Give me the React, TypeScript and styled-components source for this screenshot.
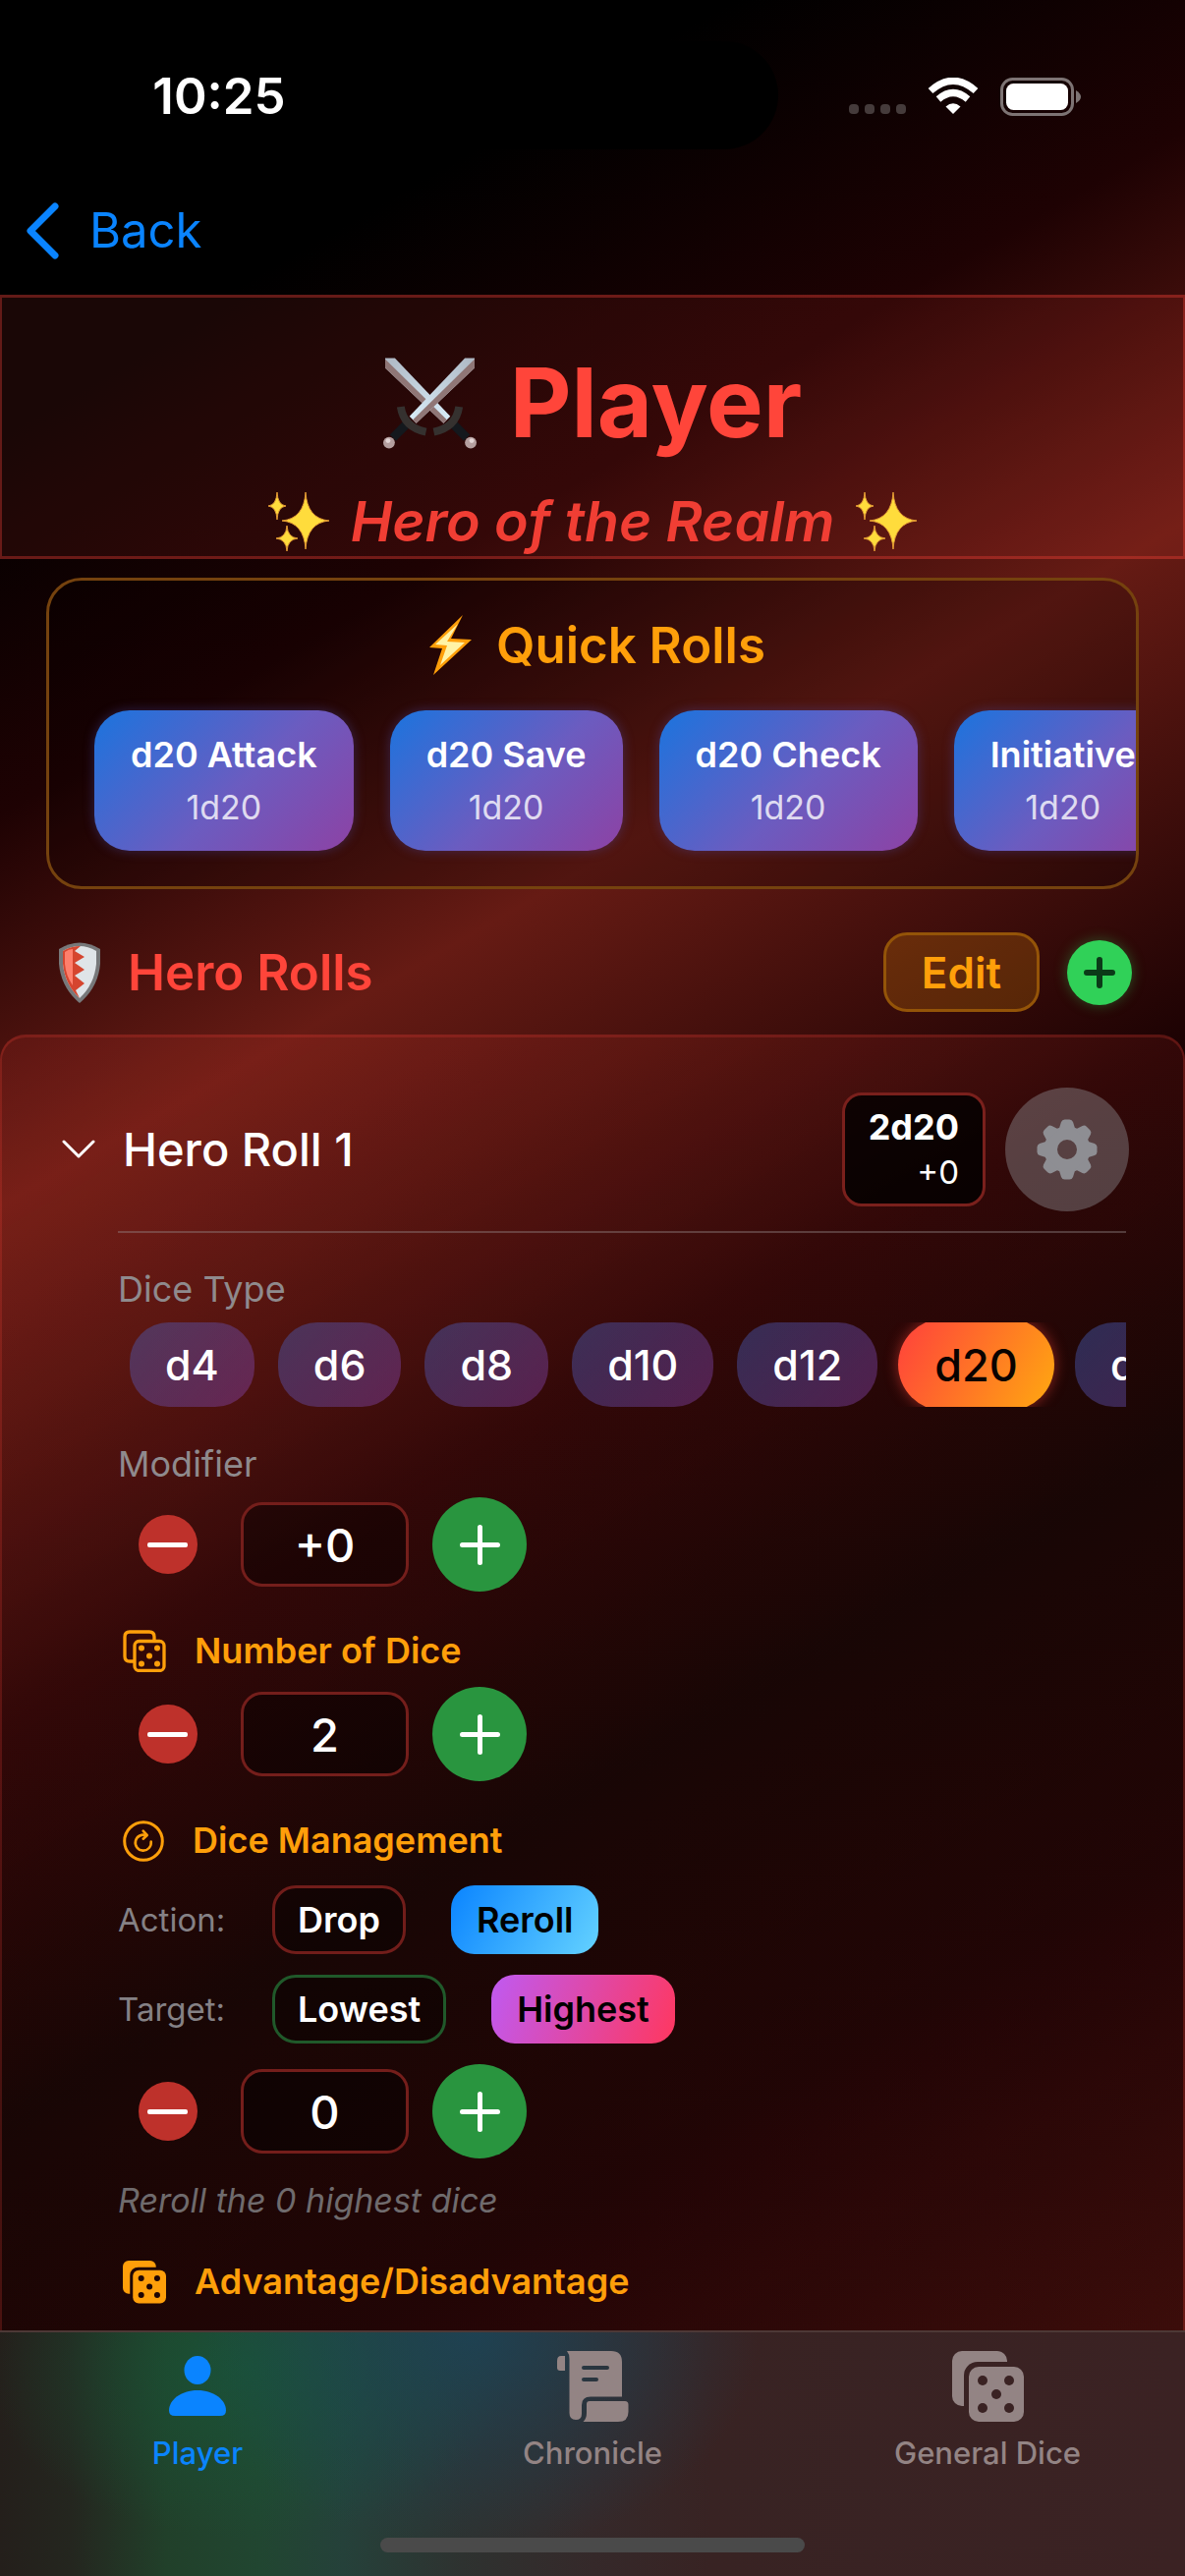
import React, { useState } from "react";
import styled, { createGlobalStyle, css } from "styled-components";

const GlobalStyle = createGlobalStyle`
  *, *::before, *::after { box-sizing: border-box; }
  html, body { margin: 0; background: #000; }
  body, button, input {
    font-family: Inter, "Liberation Sans", sans-serif;
    color: #fff;
  }
  h1, h2, h3, p { margin: 0; }
  button { padding: 0; border: 0; background: none; cursor: pointer; flex: none; }
  svg { display: block; flex: none; }
`;

/* ---------- page frame ---------- */

const Screen = styled.div`
  display: flex;
  flex-direction: column;
  height: 100vh;
  overflow: hidden;
  background: linear-gradient(
    150deg,
    #000 13%,
    #1e0203 25%,
    #661b14 37%,
    #1c0203 53%,
    #030000 65%,
    #100002 78%,
    #300a08 93%
  );
`;

const StatusBar = styled.header`
  display: grid;
  grid-template-columns: 1fr 378px 1fr;
  flex: none;
  height: 170px;
  padding-top: 42px;
`;

const Clock = styled.time`
  justify-self: center;
  padding-left: 32px;
  font-size: 51px;
  font-weight: 600;
  line-height: 112px;
`;

const Island = styled.div`
  height: 110px;
  border-radius: 55px;
  background: #000;
`;

const StatusIcons = styled.div`
  display: flex;
  align-items: center;
  justify-content: flex-end;
  gap: 22px;
  height: 112px;
  padding-right: 106px;
`;

const Signal = styled.div`
  display: flex;
  gap: 6px;
  padding-top: 26px;
`;

const SignalDot = styled.i`
  width: 10px;
  height: 10px;
  border-radius: 4px;
  background: #453b3b;
`;

const NavBar = styled.nav`
  flex: none;
  height: 130px;
  padding: 29px 23px 0;
`;

const BackLink = styled.a`
  display: inline-flex;
  align-items: center;
  gap: 30px;
  color: #0a84ff;
  font-size: 49px;
  line-height: 72px;
  text-decoration: none;
`;

const Scroll = styled.main`
  flex: 1;
  min-height: 0;
  overflow: hidden;
`;

/* ---------- hero banner ---------- */

const Banner = styled.section`
  display: flex;
  flex-direction: column;
  align-items: center;
  gap: 24px;
  padding-top: 46px;
  border: solid rgba(255, 69, 58, 0.32);
  border-width: 3px 2px;
  background: rgba(255, 69, 58, 0.1);
`;

const Title = styled.h1`
  display: flex;
  align-items: center;
  gap: 34px;
  color: #ff453a;
  font-size: 97px;
  font-weight: 700;
  line-height: 122px;
`;

const Subtitle = styled.p`
  display: flex;
  align-items: center;
  gap: 22px;
  color: #f03e34;
  font-size: 57px;
  font-style: italic;
  font-weight: 600;
  line-height: 71px;
`;

/* ---------- quick rolls ---------- */

const QuickPanel = styled.section`
  margin: 19px 47px 0;
  padding: 35px 0 36px 46px;
  overflow: hidden;
  border: 3px solid #75420e;
  border-radius: 36px;
  background: rgba(0, 0, 0, 0.2);
`;

const QuickTitle = styled.h2`
  display: flex;
  align-items: center;
  justify-content: center;
  gap: 24px;
  padding-right: 36px;
  color: #ff9f0a;
  font-size: 51px;
  font-weight: 600;
  line-height: 60px;
`;

const QuickRow = styled.div`
  display: flex;
  gap: 37px;
  margin-top: 35px;
`;

const QuickButton = styled.button`
  display: flex;
  flex-direction: column;
  align-items: center;
  gap: 12px;
  padding: 24px 37px;
  border-radius: 36px;
  background: linear-gradient(135deg, #1b74de, #6b5cc0 55%, #8d42a4);
  box-shadow: 0 0 12px rgba(80, 80, 180, 0.4);
`;

const QuickName = styled.span`
  font-size: 36px;
  font-weight: 600;
  line-height: 43px;
`;

const QuickDice = styled.span`
  color: rgba(255, 255, 255, 0.8);
  font-size: 34px;
  line-height: 40px;
`;

/* ---------- hero rolls ---------- */

const SectionBar = styled.div`
  display: flex;
  align-items: center;
  gap: 28px;
  margin: 44px 0 23px;
  padding: 0 54px 0 60px;
`;

const SectionTitle = styled.h2`
  flex: 1;
  color: #ff453a;
  font-size: 51px;
  font-weight: 600;
  line-height: 60px;
`;

const EditButton = styled.button`
  height: 81px;
  padding: 0 36px;
  border: 3px solid #945408;
  border-radius: 24px;
  background: rgba(255, 159, 10, 0.2);
  color: #ff9f0a;
  font-size: 44px;
  font-weight: 600;
`;

const AddButton = styled.button`
  display: grid;
  place-items: center;
  width: 66px;
  height: 66px;
  border-radius: 50%;
  background: #30d158;
  box-shadow: 0 0 14px rgba(48, 209, 88, 0.35);
`;

const RollCard = styled.article`
  min-height: 1400px;
  padding: 51px 55px 36px 58px;
  border: solid rgba(255, 69, 58, 0.22);
  border-width: 3px 2px;
  border-radius: 26px;
  background: linear-gradient(150deg, rgba(255, 69, 58, 0.12), rgba(255, 69, 58, 0.06));
`;

const RollHead = styled.div`
  display: flex;
  align-items: center;
  gap: 20px;
  padding-left: 3px;
`;

const RollToggle = styled.button`
  display: flex;
  flex: 1;
  align-items: center;
  gap: 28px;
  font-size: 47px;
  font-weight: 500;
  line-height: 60px;
  text-align: left;
`;

const RollBadge = styled.div`
  display: flex;
  flex-direction: column;
  gap: 4px;
  align-items: flex-end;
  padding: 11px 24px;
  border: 3px solid #7a201c;
  border-radius: 20px;
  background: rgba(0, 0, 0, 0.8);
  font-size: 33px;
  line-height: 42px;
`;

const BadgeDice = styled.strong`
  font-size: 36px;
  font-weight: 700;
`;

const GearButton = styled.button`
  display: grid;
  place-items: center;
  width: 126px;
  height: 126px;
  border-radius: 50%;
  background: rgba(142, 142, 147, 0.42);
`;

const RollBody = styled.div`
  display: flex;
  flex-direction: column;
  gap: 36px;
  margin: 20px 3px 0 60px;
  padding-top: 35px;
  border-top: 2px solid rgba(150, 140, 140, 0.4);
`;

const Group = styled.section<{ $roomy?: boolean }>`
  display: flex;
  flex-direction: column;
  gap: ${(p) => (p.$roomy ? "21px" : "12px")};
`;

const FieldLabel = styled.h3`
  color: #8f8a8d;
  font-size: 36px;
  font-weight: 400;
  line-height: 44px;
`;

const GroupTitle = styled.h3`
  display: flex;
  align-items: center;
  gap: 29px;
  padding-left: 5px;
  color: #ff9f0a;
  font-size: 36px;
  font-weight: 600;
  line-height: 49px;
`;

const DiceRow = styled.div`
  display: flex;
  align-items: center;
  gap: 24px;
  height: 86px;
  padding-left: 12px;
  overflow: hidden;
`;

const DiceChip = styled.button<{ $selected: boolean }>`
  height: 86px;
  padding: 0 36px;
  border-radius: 40px;
  background: linear-gradient(135deg, rgba(62, 102, 200, 0.4), rgba(147, 68, 182, 0.4));
  font-size: 43px;
  font-weight: 500;

  ${(p) =>
    p.$selected &&
    css`
      height: 94px;
      margin: 0 -3px;
      padding: 0 37px;
      border-radius: 47px;
      background: linear-gradient(120deg, #ff453a 5%, #ff9f14 90%);
      box-shadow: 0 0 14px rgba(255, 69, 58, 0.5);
      color: #0a0200;
      font-size: 45px;
    `}
`;

const StepperRow = styled.div`
  display: flex;
  align-items: center;
  gap: 24px;
  height: 96px;
`;

const MinusButton = styled.button`
  display: grid;
  place-items: center;
  width: 101px;
  height: 96px;
`;

const MinusDisc = styled.span`
  display: grid;
  place-items: center;
  width: 60px;
  height: 60px;
  border-radius: 50%;
  background: #be312b;
`;

const PlusButton = styled.button`
  display: grid;
  place-items: center;
  width: 96px;
  height: 96px;
  border-radius: 50%;
  background: #29953f;
`;

const StepperInput = styled.input`
  width: 171px;
  height: 86px;
  padding: 0;
  border: 3px solid #741e1b;
  border-radius: 22px;
  outline: none;
  background: rgba(0, 0, 0, 0.4);
  font-size: 47px;
  font-weight: 500;
  text-align: center;
`;

const ChoiceRow = styled.div`
  display: flex;
  align-items: center;
  gap: 46px;
  height: 70px;
`;

const ChoiceLabel = styled.span`
  color: #858185;
  width: 111px;
  font-size: 33px;
  line-height: 40px;
`;

const tones = {
  red: "#711d1a",
  green: "#20592a",
  blue: "linear-gradient(120deg, #0a84ff, #64d2ff)",
  pink: "linear-gradient(110deg, #bf5af2, #ff375f)",
};

const ChoiceButton = styled.button<{ $tone: keyof typeof tones; $filled?: boolean }>`
  height: 70px;
  padding: 0 26px;
  border-radius: 24px;
  font-size: 36px;
  font-weight: 600;
  ${(p) =>
    p.$filled
      ? css`
          background: ${tones[p.$tone]};
          color: #000;
        `
      : css`
          padding: 0 23px;
          border: 3px solid ${tones[p.$tone]};
          background: rgba(0, 0, 0, 0.3);
        `}
`;

const Note = styled.p`
  color: #6f6b6d;
  font-size: 34px;
  font-style: italic;
  line-height: 44px;
`;

/* ---------- tab bar ---------- */

const TabBar = styled.footer`
  display: flex;
  flex: none;
  flex-direction: column;
  align-items: center;
  justify-content: space-between;
  height: 250px;
  padding-bottom: 24px;
  border-top: 2px solid #4d3836;
  background:
    radial-gradient(ellipse 24% 90% at 40% 0%, rgba(28, 68, 88, 0.85), rgba(28, 68, 88, 0)),
    radial-gradient(ellipse 22% 70% at 21% 15%, rgba(24, 86, 56, 0.75), rgba(24, 86, 56, 0)),
    linear-gradient(
      90deg,
      #241f1b 0%,
      #24261f 6%,
      #21402a 14%,
      #214631 22%,
      #25413a 29%,
      #2e3230 39%,
      #35292a 50%,
      #382323 60%,
      #3b2223 100%
    );
`;

const Tabs = styled.nav`
  display: grid;
  grid-template-columns: repeat(3, 1fr);
  width: 100%;
`;

const Tab = styled.a<{ $active?: boolean }>`
  display: flex;
  flex-direction: column;
  align-items: center;
  gap: 10px;
  padding-top: 15px;
  color: ${(p) => (p.$active ? "#0a84ff" : "#938484")};
  font-size: 31px;
  font-weight: 500;
  line-height: 36px;
  text-decoration: none;
`;

const TabIcon = styled.span`
  display: grid;
  place-items: center;
  height: 80px;
`;

const HomeIndicator = styled.div`
  width: 432px;
  height: 15px;
  border-radius: 8px;
  background: #4a4a4a;
`;

/* ---------- drawings ---------- */

const Wifi = () => (
  <svg width="52" height="38" viewBox="0 0 52 38" fill="none" stroke="#fff">
    <path d="M3 13.500 Q26 -7 49 13.500" strokeWidth="7" />
    <path d="M11 22 Q26 9 41 22" strokeWidth="7" />
    <path d="M26 37 L18.500 29.500 Q26 23 33.500 29.500Z" fill="#fff" stroke="none" />
  </svg>
);

const Battery = () => (
  <svg width="82" height="39" viewBox="0 0 82 39">
    <rect x="1.500" y="1.500" width="72" height="36" rx="11" fill="none" stroke="#7d7474" strokeWidth="3" />
    <rect x="6" y="6" width="63" height="27" rx="7.500" fill="#fff" />
    <path d="M77 13 Q82 16 82 19.500 Q82 23 77 26Z" fill="#7d7474" />
  </svg>
);

const BackChevron = () => (
  <svg width="38" height="60" viewBox="0 0 38 60" fill="none" stroke="#0a84ff" strokeWidth="7" strokeLinecap="round" strokeLinejoin="round">
    <path d="M33 5 L8 30 L33 55" />
  </svg>
);

const SwordHalf = ({ fill }: { fill: string }) => (
  <>
    <path d="M83 1 H93 V11 L33 68 L26 61Z" fill={fill} />
    <path d="M93 2 V11 L33 68 L29.500 64.500Z" fill="#8f7676" />
    <path d="M22 70 L9 83" stroke="#14181d" strokeWidth="9" />
    <path d="M17 51 Q20 72 43 77" stroke="#35312f" strokeWidth="8" fill="none" />
    <circle cx="5" cy="88" r="6" fill="#b49f9f" />
    <circle cx="4" cy="86" r="2.500" fill="#e2d5d5" />
  </>
);

const Swords = () => (
  <svg width="95" height="95" viewBox="-1 0 96 95">
    <defs>
      <linearGradient id="blade" x1="0" y1="1" x2="1" y2="0">
        <stop offset="0" stopColor="#d9eefa" />
        <stop offset="1" stopColor="#aeb8c4" />
      </linearGradient>
    </defs>
    <g transform="translate(94 0) scale(-1 1)">
      <SwordHalf fill="url(#blade)" />
    </g>
    <SwordHalf fill="url(#blade)" />
  </svg>
);

const star = (x: number, y: number, rx: number, ry: number) => {
  const a = rx * 0.07;
  const b = ry * 0.07;
  return `M${x} ${y - ry} Q${x + a} ${y - b} ${x + rx} ${y} Q${x + a} ${y + b} ${x} ${y + ry} Q${x - a} ${y + b} ${x - rx} ${y} Q${x - a} ${y - b} ${x} ${y - ry}Z`;
};

const Sparkles = () => (
  <svg width="62" height="60" viewBox="0 0 62 60" fill="#ffdc3c" stroke="#e39a34" strokeWidth="1">
    <path d={star(38, 29, 24, 29)} />
    <path d={star(9, 14, 9, 14)} />
    <path d={star(19, 47, 11, 13)} />
  </svg>
);

const Bolt = () => (
  <svg width="44" height="62" viewBox="0 0 44 62">
    <path d="M34 0 L22 24 L43 25 L4 61 L13 34 L0 33Z" fill="#ff9f0a" />
    <path d="M29 9 L18 27 L36 28 L11 51 L18 31 L6 30Z" fill="#fff3a6" />
  </svg>
);

const Shield = () => (
  <svg width="42" height="62" viewBox="0 0 42 62">
    <path d="M0 7 Q21 -6 42 7 V22 Q40 46 21 62 Q2 46 0 22Z" fill="#77787a" />
    <path d="M4 9 Q21 -1 38 9 V22 Q36 43 21 57 Q6 43 4 22Z" fill="#dfe4e8" />
    <path d="M4 9 Q12 4 22 4 L16 9 L26 15 L16 21 L26 28 L16 34 L26 42 L17 49 L21 57 Q6 43 4 22Z" fill="#d5452f" />
    <path d="M6 10 Q10 7 14 7 V44 Q7 34 6 22Z" fill="#ff7f6c" />
  </svg>
);

const Plus = ({ size, color, weight }: { size: number; color: string; weight: number }) => (
  <svg width={size} height={size} viewBox={`0 0 ${size} ${size}`} stroke={color} strokeWidth={weight} strokeLinecap="round">
    <path d={`M${weight / 2} ${size / 2} H${size - weight / 2} M${size / 2} ${weight / 2} V${size - weight / 2}`} />
  </svg>
);

const Minus = () => (
  <svg width="41" height="5" viewBox="0 0 41 5">
    <rect width="41" height="5" rx="2" fill="#fff" />
  </svg>
);

const DownChevron = () => (
  <svg width="34" height="20" viewBox="0 0 34 20" fill="none" stroke="#fff" strokeWidth="3" strokeLinecap="round" strokeLinejoin="round">
    <path d="M2 2 L17 17 L32 2" />
  </svg>
);

const Gear = () => (
  <svg width="62" height="62" viewBox="-31 -31 62 62" fill="#8e8e93">
    <path
      fillRule="evenodd"
      d="M0 -23.500 A23.500 23.500 0 1 1 0 23.500 A23.500 23.500 0 1 1 0 -23.500Z M0 -10 A10 10 0 1 0 0 10 A10 10 0 1 0 0 -10Z"
    />
    {[0, 45, 90, 135, 180, 225, 270, 315].map((deg) => (
      <path key={deg} transform={`rotate(${deg})`} d="M-8.500 -20 L-6 -28 Q-5 -30.500 -2.500 -30.500 H2.500 Q5 -30.500 6 -28 L8.500 -20Z" />
    ))}
  </svg>
);

const DiceOutline = () => (
  <svg width="44" height="43" viewBox="0 0 44 43" fill="none" stroke="#ff9f0a" strokeWidth="3.300">
    <path d="M11 32 H7 Q2 32 2 27 V7 Q2 2 7 2 H27 Q32 2 32 7 V11" />
    <rect x="12" y="11.500" width="30" height="30" rx="4.500" />
    <g fill="#ff9f0a" stroke="none">
      <circle cx="19" cy="18.500" r="3" />
      <circle cx="35" cy="18.500" r="3" />
      <circle cx="27" cy="26.500" r="3" />
      <circle cx="19" cy="34.500" r="3" />
      <circle cx="35" cy="34.500" r="3" />
    </g>
  </svg>
);

const DiceFilled = ({ size, id }: { size: number; id: string }) => (
  <svg width={size} height={size} viewBox="0 0 73 73" fill="currentColor">
    <mask id={`${id}-back`}>
      <rect width="73" height="73" fill="#fff" />
      <rect x="12" y="11" width="80" height="80" rx="14" fill="#000" />
    </mask>
    <mask id={`${id}-front`}>
      <rect width="73" height="73" fill="#fff" />
      <g fill="#000">
        <circle cx="31" cy="30" r="5" />
        <circle cx="58" cy="30" r="5" />
        <circle cx="45" cy="44" r="5" />
        <circle cx="31" cy="58" r="5" />
        <circle cx="58" cy="58" r="5" />
      </g>
    </mask>
    <rect width="56" height="56" rx="10" mask={`url(#${id}-back)`} />
    <rect x="17" y="16" width="56" height="56" rx="10" mask={`url(#${id}-front)`} />
  </svg>
);

const RotateCircle = () => (
  <svg width="42" height="42" viewBox="0 0 42 42" fill="none" stroke="#ff9f0a" strokeWidth="3" strokeLinecap="round" strokeLinejoin="round">
    <circle cx="21" cy="21" r="19.300" />
    <path d="M28.700 21.500 A8 8 0 1 1 24 15.300" strokeWidth="2.600" />
    <path d="M20.700 10.700 L24.700 15 L20.700 18.700" strokeWidth="2.600" />
  </svg>
);

const Person = () => (
  <svg width="58" height="62" viewBox="0 0 58 62" fill="currentColor">
    <ellipse cx="29" cy="14.500" rx="13.500" ry="14.500" />
    <path d="M29 35 C46 35 58 45 58 55.500 Q58 61 52 61 H6 Q0 61 0 55.500 C0 45 12 35 29 35Z" />
  </svg>
);

const ScrollIcon = () => (
  <svg width="73" height="72" viewBox="0 0 73 72" fill="currentColor">
    <mask id="scroll-lines">
      <rect width="73" height="72" fill="#fff" />
      <path d="M27 17 H51 M27 29 H40" stroke="#000" strokeWidth="4" strokeLinecap="round" />
    </mask>
    <path d="M8 5 V20 H3 Q0 20 0 17 V10 Q0 5 4 5Z" />
    <path mask="url(#scroll-lines)" d="M10 0 H55 Q66 0 66 11 V46.500 H34 Q25 46.500 25 55 V64 Q25 70 19 70 Q12.500 70 12.500 63 V8 Q12.500 3 10 0Z" />
    <path d="M26.500 72 Q30 69 30 63 V54 Q30 51 33 51 H69 Q72.500 51 72.500 54.500 V62 Q72.500 72 62 72Z" />
  </svg>
);

/* ---------- pieces ---------- */

type StepperProps = { label: string; initial: number; signed?: boolean };

function Stepper({ label, initial, signed }: StepperProps) {
  const [value, setValue] = useState(initial);
  const text = signed && value >= 0 ? `+${value}` : `${value}`;
  return (
    <StepperRow>
      <MinusButton aria-label={`Decrease ${label}`} onClick={() => setValue(value - 1)}>
        <MinusDisc>
          <Minus />
        </MinusDisc>
      </MinusButton>
      <StepperInput
        aria-label={label}
        value={text}
        onChange={(e) => setValue(parseInt(e.target.value, 10) || 0)}
      />
      <PlusButton aria-label={`Increase ${label}`} onClick={() => setValue(value + 1)}>
        <Plus size={41} color="#fff" weight={5} />
      </PlusButton>
    </StepperRow>
  );
}

const quickRolls = ["d20 Attack", "d20 Save", "d20 Check", "Initiative"];
const diceTypes = ["d4", "d6", "d8", "d10", "d12", "d20", "d100"];

export default function App() {
  const [dice, setDice] = useState("d20");

  return (
    <>
      <GlobalStyle />
      <Screen>
        <StatusBar>
          <Clock>10:25</Clock>
          <Island />
          <StatusIcons>
            <Signal>
              <SignalDot />
              <SignalDot />
              <SignalDot />
              <SignalDot />
            </Signal>
            <Wifi />
            <Battery />
          </StatusIcons>
        </StatusBar>

        <NavBar>
          <BackLink href="#back">
            <BackChevron />
            Back
          </BackLink>
        </NavBar>

        <Scroll>
          <Banner>
            <Title>
              <Swords />
              Player
            </Title>
            <Subtitle>
              <Sparkles />
              Hero of the Realm
              <Sparkles />
            </Subtitle>
          </Banner>

          <QuickPanel>
            <QuickTitle>
              <Bolt />
              Quick Rolls
            </QuickTitle>
            <QuickRow>
              {quickRolls.map((name) => (
                <QuickButton key={name}>
                  <QuickName>{name}</QuickName>
                  <QuickDice>1d20</QuickDice>
                </QuickButton>
              ))}
            </QuickRow>
          </QuickPanel>

          <SectionBar>
            <Shield />
            <SectionTitle>Hero Rolls</SectionTitle>
            <EditButton>Edit</EditButton>
            <AddButton aria-label="Add hero roll">
              <Plus size={32} color="#0b3a18" weight={6} />
            </AddButton>
          </SectionBar>

          <RollCard>
            <RollHead>
              <RollToggle aria-expanded="true">
                <DownChevron />
                Hero Roll 1
              </RollToggle>
              <RollBadge>
                <BadgeDice>2d20</BadgeDice>
                +0
              </RollBadge>
              <GearButton aria-label="Roll settings">
                <Gear />
              </GearButton>
            </RollHead>

            <RollBody>
              <Group>
                <FieldLabel>Dice Type</FieldLabel>
                <DiceRow>
                  {diceTypes.map((type) => (
                    <DiceChip key={type} $selected={type === dice} aria-pressed={type === dice} onClick={() => setDice(type)}>
                      {type}
                    </DiceChip>
                  ))}
                </DiceRow>
              </Group>

              <Group>
                <FieldLabel>Modifier</FieldLabel>
                <Stepper label="Modifier" initial={0} signed />
              </Group>

              <Group>
                <GroupTitle>
                  <DiceOutline />
                  Number of Dice
                </GroupTitle>
                <Stepper label="Number of dice" initial={2} />
              </Group>

              <Group $roomy>
                <GroupTitle>
                  <RotateCircle />
                  Dice Management
                </GroupTitle>
                <ChoiceRow>
                  <ChoiceLabel>Action:</ChoiceLabel>
                  <ChoiceButton $tone="red">Drop</ChoiceButton>
                  <ChoiceButton $tone="blue" $filled>Reroll</ChoiceButton>
                </ChoiceRow>
                <ChoiceRow>
                  <ChoiceLabel>Target:</ChoiceLabel>
                  <ChoiceButton $tone="green">Lowest</ChoiceButton>
                  <ChoiceButton $tone="pink" $filled>Highest</ChoiceButton>
                </ChoiceRow>
                <Stepper label="Affected dice" initial={0} />
                <Note>Reroll the 0 highest dice</Note>
              </Group>

              <GroupTitle>
                <DiceFilled size={44} id="advantage" />
                Advantage/Disadvantage
              </GroupTitle>
            </RollBody>
          </RollCard>
        </Scroll>

        <TabBar>
          <Tabs>
            <Tab href="#player" $active>
              <TabIcon>
                <Person />
              </TabIcon>
              Player
            </Tab>
            <Tab href="#chronicle">
              <TabIcon>
                <ScrollIcon />
              </TabIcon>
              Chronicle
            </Tab>
            <Tab href="#general-dice">
              <TabIcon>
                <DiceFilled size={73} id="general" />
              </TabIcon>
              General Dice
            </Tab>
          </Tabs>
          <HomeIndicator />
        </TabBar>
      </Screen>
    </>
  );
}
